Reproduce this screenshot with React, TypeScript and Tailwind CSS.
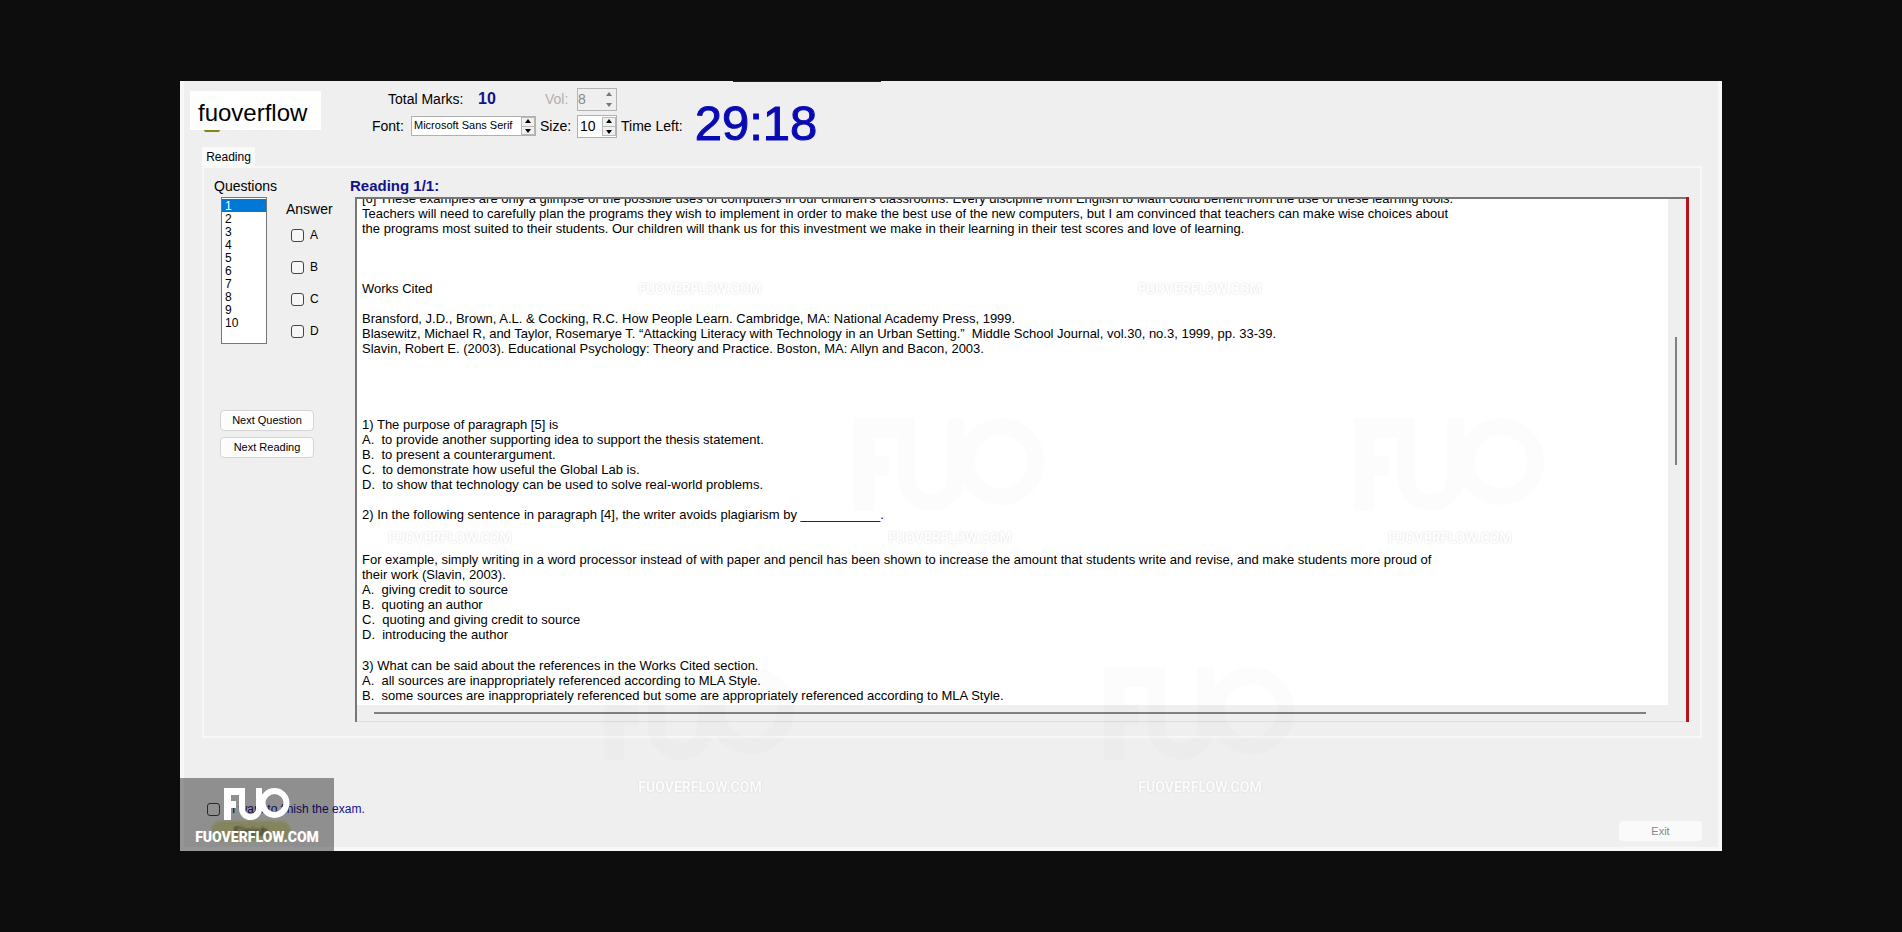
import React from "react";
import clsx from "clsx";

const questions = ["1", "2", "3", "4", "5", "6", "7", "8", "9", "10"];
const answers = ["A", "B", "C", "D"];

const passage: string[][] = [
  [
    "[6] These examples are only a glimpse of the possible uses of computers in our children's classrooms. Every discipline from English to Math could benefit from the use of these learning tools.",
    "Teachers will need to carefully plan the programs they wish to implement in order to make the best use of the new computers, but I am convinced that teachers can make wise choices about",
    "the programs most suited to their students. Our children will thank us for this investment we make in their learning in their test scores and love of learning.",
    "",
    "",
    "",
    "Works Cited",
    "",
    "Bransford, J.D., Brown, A.L. & Cocking, R.C. How People Learn. Cambridge, MA: National Academy Press, 1999.",
    "Blasewitz, Michael R, and Taylor, Rosemarye T. “Attacking Literacy with Technology in an Urban Setting.”  Middle School Journal, vol.30, no.3, 1999, pp. 33-39.",
    "Slavin, Robert E. (2003). Educational Psychology: Theory and Practice. Boston, MA: Allyn and Bacon, 2003.",
    "",
    "",
    "",
    "",
  ],
  [
    "1) The purpose of paragraph [5] is",
    "A.  to provide another supporting idea to support the thesis statement.",
    "B.  to present a counterargument.",
    "C.  to demonstrate how useful the Global Lab is.",
    "D.  to show that technology can be used to solve real-world problems.",
    "",
    "2) In the following sentence in paragraph [4], the writer avoids plagiarism by ___________.",
    "",
    "",
    "For example, simply writing in a word processor instead of with paper and pencil has been shown to increase the amount that students write and revise, and make students more proud of",
    "their work (Slavin, 2003).",
    "A.  giving credit to source",
    "B.  quoting an author",
    "C.  quoting and giving credit to source",
    "D.  introducing the author",
    "",
  ],
  [
    "3) What can be said about the references in the Works Cited section.",
    "A.  all sources are inappropriately referenced according to MLA Style.",
    "B.  some sources are inappropriately referenced but some are appropriately referenced according to MLA Style.",
  ],
];

function Arrows({ dim = false, framed = false }: { dim?: boolean; framed?: boolean }) {
  return (
    <span
      className={clsx(
        "flex w-3.5 shrink-0 flex-col items-center justify-between py-px",
        framed && "border border-[#b8b8b8] bg-[#f0f0f0]",
        dim ? "text-[#777]" : "text-black",
      )}
    >
      <svg viewBox="0 0 7 4" className="h-1 w-2 fill-current"><path d="M3.5 0 6.5 4h-6z" /></svg>
      <span className={clsx("h-px w-full", dim ? "bg-transparent" : "bg-[#b8b8b8]")} />
      <svg viewBox="0 0 7 4" className="h-1 w-2 fill-current"><path d="M3.5 4 6.5 0h-6z" /></svg>
    </span>
  );
}

function FuoMark({ className }: { className?: string }) {
  return (
    <svg viewBox="0 0 66 33" className={className} fill="none" stroke="currentColor">
      <path d="M3.5 32V3.500H15M4 16.500h8" strokeWidth="7" />
      <path d="M18 0V20.500a8.500 8.500 0 0 0 17 0V0" strokeWidth="6" />
      <circle cx="50.5" cy="15" r="12" strokeWidth="6" />
    </svg>
  );
}

function Watermark({ className, mark = false }: { className: string; mark?: boolean }) {
  return (
    <div className={clsx("pointer-events-none absolute flex w-52 flex-col items-center", className)}>
      {mark && <FuoMark className="mb-4 h-24 w-48 text-black opacity-[0.006]" />}
      <span className="font-[Roboto,sans-serif] text-sm leading-4 font-bold text-white opacity-80 [text-shadow:0_0_2px_#ccc]">
        FUOVERFLOW.COM
      </span>
    </div>
  );
}

function NextButton({ children }: { children: React.ReactNode }) {
  return (
    <button className="h-[21px] w-[94px] rounded-sm border border-[#d4d4d4] bg-[#fdfdfd] text-[11px] leading-none">
      {children}
    </button>
  );
}

export default function App() {
  return (
    <div className="min-h-screen bg-[#0d0d0d] px-45 pt-[81px] pb-20 font-['Liberation_Sans',Arial,sans-serif] text-black">
      <main className="relative flex flex-col border-x-4 border-b-4 border-[#f8f8f8] bg-[#efefef]">
        <div className="absolute top-0 left-[549px] h-px w-37 bg-[#222]" />

        <header className="flex h-[66px] items-start">
          <div className="mt-2.5 ml-1.5 w-[131px] shrink-0">
            <h1 className="flex h-[39px] items-center bg-white pt-1 pl-2 text-2xl">fuoverflow</h1>
            <div className="ml-3.5 h-0.5 w-4 rounded-b-full bg-[#8a8210]" />
          </div>
          <div className="ml-[51px] flex flex-col gap-[3px] pt-1.5 text-sm">
            <div className="flex h-6 items-center">
              <span className="ml-4 w-[90px]">Total Marks:</span>
              <b className="w-[67px] text-base text-[#12128c]">10</b>
              <label htmlFor="vol" className="w-8 text-[#b0b0b0]">Vol:</label>
              <div className="flex h-[23px] w-10 justify-between border border-[#b4b4b4] py-0.5">
                <input id="vol" disabled defaultValue="8" className="w-5 text-[#888]" />
                <Arrows dim />
              </div>
            </div>
            <div className="flex h-6 items-center">
              <label htmlFor="font" className="w-[39px]">Font:</label>
              <div className="flex h-5 w-[125px] border border-[#b0b0b0] bg-white">
                <input id="font" defaultValue="Microsoft Sans Serif" className="w-0 flex-1 pl-0.5 text-[11px]" />
                <Arrows framed />
              </div>
              <label htmlFor="size" className="w-[41px] pl-1">Size:</label>
              <div className="flex h-[23px] w-10 justify-between border border-[#b0b0b0] bg-white py-px">
                <input id="size" defaultValue="10" className="w-5 pl-0.5" />
                <Arrows framed />
              </div>
              <span className="pl-1">Time Left:</span>
            </div>
          </div>
          <time className="ml-3 pt-[18px] text-[49px] leading-none text-[#0a0ab4] [-webkit-text-stroke:1px]">29:18</time>
        </header>

        <div className="ml-[18px] flex w-[53px] bg-[#fafafa]">
          <button className="h-[19px] w-full text-xs leading-none">Reading</button>
        </div>

        <section className="mr-4 ml-[18px] flex border-2 border-[#f8f8f8] pt-[10px] pb-[14px]">
          <aside className="w-[151px] shrink-0 text-sm">
            <label htmlFor="questions" className="block w-24 pl-2.5 leading-4">Questions</label>
            <div className="flex">
              <select
                id="questions"
                size={10}
                defaultValue="1"
                className="mt-[3px] ml-[17px] h-[147px] w-[46px] overflow-hidden border border-[#777] bg-white py-px text-xs"
              >
                {questions.map((q) => (
                  <option key={q} value={q} className="h-[13px] min-h-0 p-0 pl-[3px] leading-[13px] checked:bg-[#0078d7] checked:bg-linear-to-b checked:from-[#0078d7] checked:to-[#0078d7] checked:text-white">
                    {q}
                  </option>
                ))}
              </select>
              <fieldset className="ml-[19px]">
                <legend className="float-left pt-[5px]">Answer</legend>
                <div className="clear-both flex flex-col gap-4 pt-2 pl-[5px]">
                  {answers.map((a) => (
                    <label key={a} className="flex h-4 items-center gap-1.5 text-xs">
                      <input type="checkbox" className="size-[13px] appearance-none rounded-[3px] border border-[#444] bg-[#f6f6f6]" />
                      {a}
                    </label>
                  ))}
                </div>
              </fieldset>
            </div>
            <div className="mt-[66px] ml-4 flex flex-col gap-1.5">
              <NextButton>Next Question</NextButton>
              <NextButton>Next Reading</NextButton>
            </div>
          </aside>

          <div className="mr-[11px] flex min-w-0 flex-1 flex-col">
            <h2 className="mb-[3px] -ml-[5px] text-[15px] leading-4 font-bold text-[#12128c]">Reading 1/1:</h2>
            <div className="flex flex-1 border-r-[3px] border-[#b8141c]">
              <div className="flex min-w-0 flex-1 flex-col border-t-2 border-l-2 border-t-[#777] border-l-[#777]">
                <div className="flex">
                  <article className="h-[506px] min-w-0 flex-1 overflow-hidden bg-white pl-[5px] text-[13px] leading-[15px] whitespace-pre">
                    <div className="-mt-2 flex flex-col gap-px">
                      {passage.map((block, i) => (
                        <div key={i}>
                          {block.map((line, j) => (
                            <p key={j} className="h-[15px]">{line}</p>
                          ))}
                        </div>
                      ))}
                    </div>
                  </article>
                  <div className="w-[18px] pt-[138px] pl-[7px]">
                    <div className="h-32 w-0.5 bg-[#808080]" />
                  </div>
                </div>
                <div className="h-[17px] border-b border-[#ddd] pt-[7px] pr-10 pl-[17px]">
                  <div className="h-0.5 bg-[#808080]" />
                </div>
              </div>
            </div>
          </div>
        </section>

        <footer className="flex h-[109px] items-end justify-between pr-4">
          <div className="ml-[23px] flex flex-col">
            <label className="flex items-center gap-3 text-xs text-[#12128c]">
              <input type="checkbox" className="size-[13px] appearance-none rounded-[3px] border border-[#444]" />
              I want to finish the exam.
            </label>
            <button className="mt-1 mb-1.5 ml-1 h-5 w-20 rounded-full bg-[#dcdc9c] text-[13px] leading-none text-[#333] blur-[1px]">Finish</button>
          </div>
          <button disabled className="mb-1.5 h-5 w-[83px] rounded-sm bg-[#fafafa] text-[11px] leading-none text-[#888]">Exit</button>
        </footer>

        <Watermark className="top-[200px] left-[412px]" />
        <Watermark className="top-[200px] left-[912px]" />
        <Watermark className="top-[449px] left-[162px]" />
        <Watermark mark className="top-[337px] left-[662px]" />
        <Watermark mark className="top-[337px] left-[1162px]" />
        <Watermark mark className="top-[586px] left-[412px]" />
        <Watermark mark className="top-[586px] left-[912px]" />

        <div className="absolute -bottom-1 -left-1 flex h-[73px] w-[154px] flex-col items-center bg-black/40 pt-2.5 text-white">
          <FuoMark className="h-[33px] w-[66px]" />
          <span className="mt-1 font-[Roboto,sans-serif] text-sm leading-6 font-black">FUOVERFLOW.COM</span>
        </div>
      </main>
    </div>
  );
}
